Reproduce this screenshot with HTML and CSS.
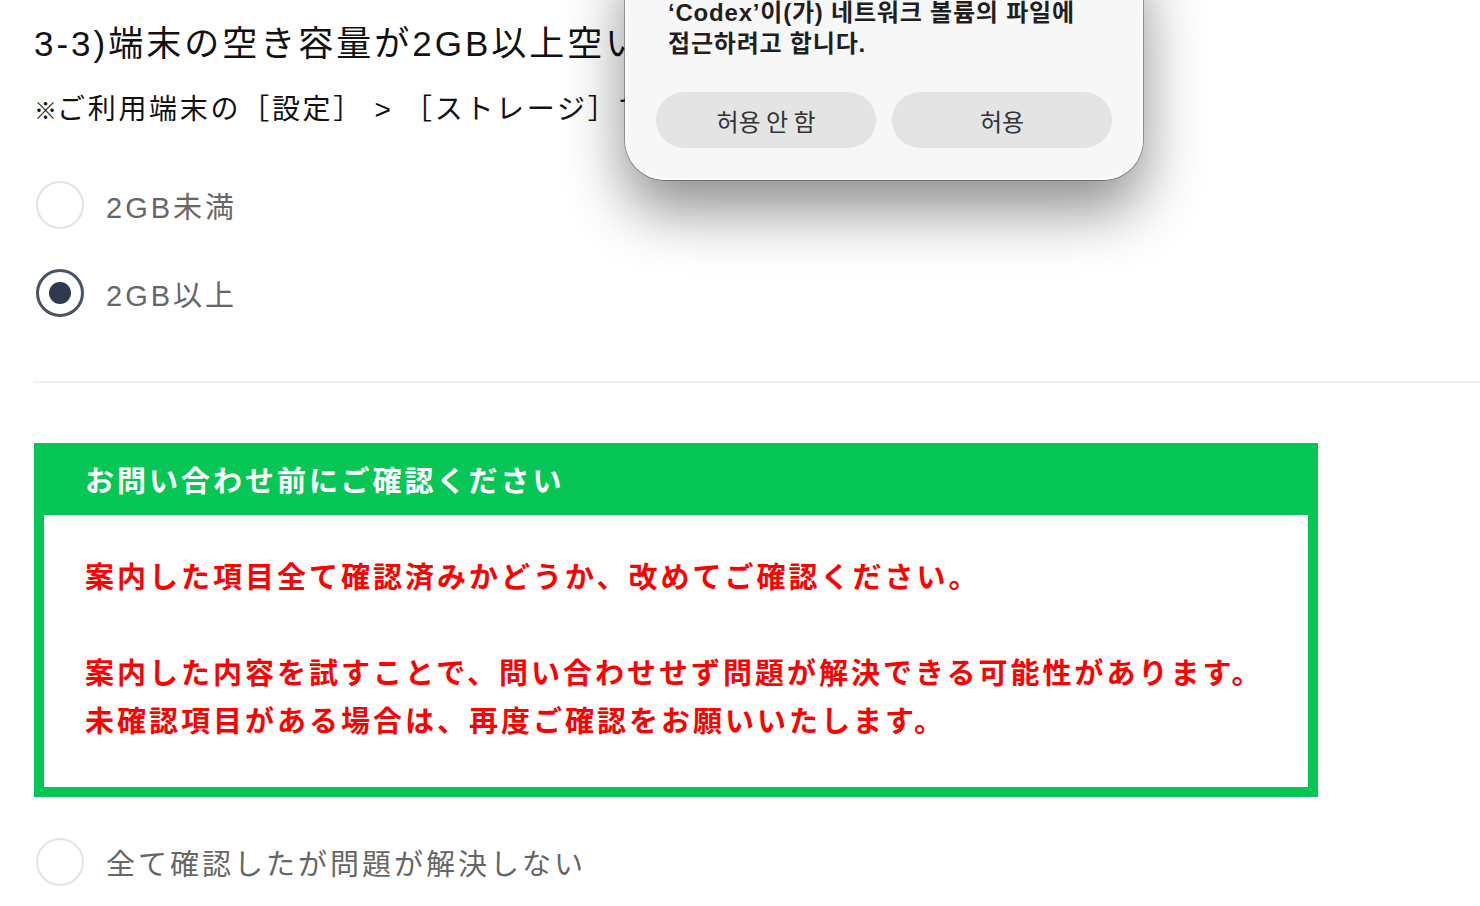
FILE: index.html
```html
<!DOCTYPE html>
<html lang="ja">
<head>
  <meta charset="UTF-8">
  <meta name="viewport" content="width=device-width, initial-scale=1.0">
  <title>お問い合わせ前チェック</title>
  <link rel="stylesheet" href="styles.css">
</head>
<body>
  <div class="survey">
    <h2 class="q-title">3-3)端末の空き容量が2GB以上空いているか確認してください</h2>
    <p class="q-note"><span class="mark">※</span>ご利用端末の［設定］ &gt; ［ストレージ］で確認できます</p>

    <div class="options">
      <label class="option"><input class="radio" type="radio" name="storage"><span>2GB未満</span></label>
      <label class="option"><input class="radio" type="radio" name="storage" checked><span>2GB以上</span></label>
    </div>

    <hr class="divider">

    <div class="notice">
      <div class="notice-head">お問い合わせ前にご確認ください</div>
      <div class="notice-body">
        案内した項目全て確認済みかどうか、改めてご確認ください。<br><br>
        案内した内容を試すことで、問い合わせせず問題が解決できる可能性があります。<br>
        未確認項目がある場合は、再度ご確認をお願いいたします。
      </div>
    </div>

    <label class="option option-last"><input class="radio" type="radio" name="result"><span>全て確認したが問題が解決しない</span></label>
  </div>

  <!-- system permission prompt -->
  <div class="perm-dialog">
    <p class="perm-text">‘Codex’이(가) 네트워크 볼륨의 파일에<br>접근하려고 합니다.</p>
    <div class="perm-actions">
      <button>허용 안 함</button>
      <button>허용</button>
    </div>
  </div>
</body>
</html>
```

FILE: styles.css
```css
* {
  box-sizing: border-box;
}

body {
  margin: 0;
  background: #fff;
  color: #111;
  font-family: "Liberation Sans", "Noto Sans CJK JP", sans-serif;
  overflow: hidden;
}

.survey {
  padding: 18px 0 40px 34px;
}

.q-title {
  margin: 0;
  font-size: 35px;
  font-weight: 400;
  line-height: 52px;
  letter-spacing: 3px;
  white-space: nowrap;
}

.q-note {
  margin: 19px 0 0;
  font-size: 28px;
  line-height: 42px;
  letter-spacing: 2.7px;
  white-space: nowrap;
}

.q-note .mark {
  font-size: 23px;
  letter-spacing: 0;
}

.options {
  margin-top: 49px;
  display: flex;
  flex-direction: column;
  gap: 40px;
}

.option {
  display: flex;
  align-items: center;
  gap: 22px;
  height: 48px;
  font-size: 29px;
  letter-spacing: 3px;
  color: #666;
}

.radio {
  appearance: none;
  margin: 0 0 0 2px;
  width: 48px;
  height: 48px;
  border: 2px solid #e1e3e8;
  border-radius: 50%;
  background: #fff;
  display: grid;
  place-items: center;
}

.radio:checked {
  border: 3px solid #4b5364;
}

.radio:checked::before {
  content: "";
  width: 22px;
  height: 22px;
  border-radius: 50%;
  background: #2e3a4f;
}

.divider {
  border: 0;
  height: 2px;
  background: #f1f1f1;
  margin: 64px 0 0;
}

.notice {
  margin-top: 60px;
  width: 1284px;
  background: #06c755;
  padding: 0 10px 10px;
  font-weight: 700;
  font-size: 29px;
  letter-spacing: 3px;
}

.notice-head {
  height: 72px;
  display: flex;
  align-items: center;
  padding-left: 41px;
  color: #fff;
}

.notice-body {
  background: #fff;
  padding: 39px 41px 41px;
  color: #ff0000;
  line-height: 48px;
  white-space: nowrap;
}

.option-last {
  margin-top: 41px;
}

/* permission prompt */
.perm-dialog {
  position: absolute;
  top: -60px;
  left: 625px;
  width: 518px;
  padding: 57px 31px 32px;
  border-radius: 40px;
  background: #f7f7f7;
  box-shadow: 0 0 0 1px rgba(0, 0, 0, 0.3),
    inset 0 0 0 1.5px rgba(255, 255, 255, 0.8),
    0 30px 60px rgba(0, 0, 0, 0.45);
  font-family: "Liberation Sans", "Noto Sans CJK KR", sans-serif;
}

.perm-text {
  margin: 0;
  padding: 0 12px;
  font-size: 24px;
  font-weight: 700;
  line-height: 31px;
  letter-spacing: 0.8px;
  color: #1f1f1f;
  white-space: nowrap;
}

.perm-actions {
  margin-top: 33px;
  display: flex;
  gap: 16px;
}

.perm-actions button {
  flex: 1;
  height: 56px;
  border: 0;
  border-radius: 28px;
  background: #e4e4e4;
  font: 24px "Noto Sans CJK KR", sans-serif;
  color: #333;
}
```
